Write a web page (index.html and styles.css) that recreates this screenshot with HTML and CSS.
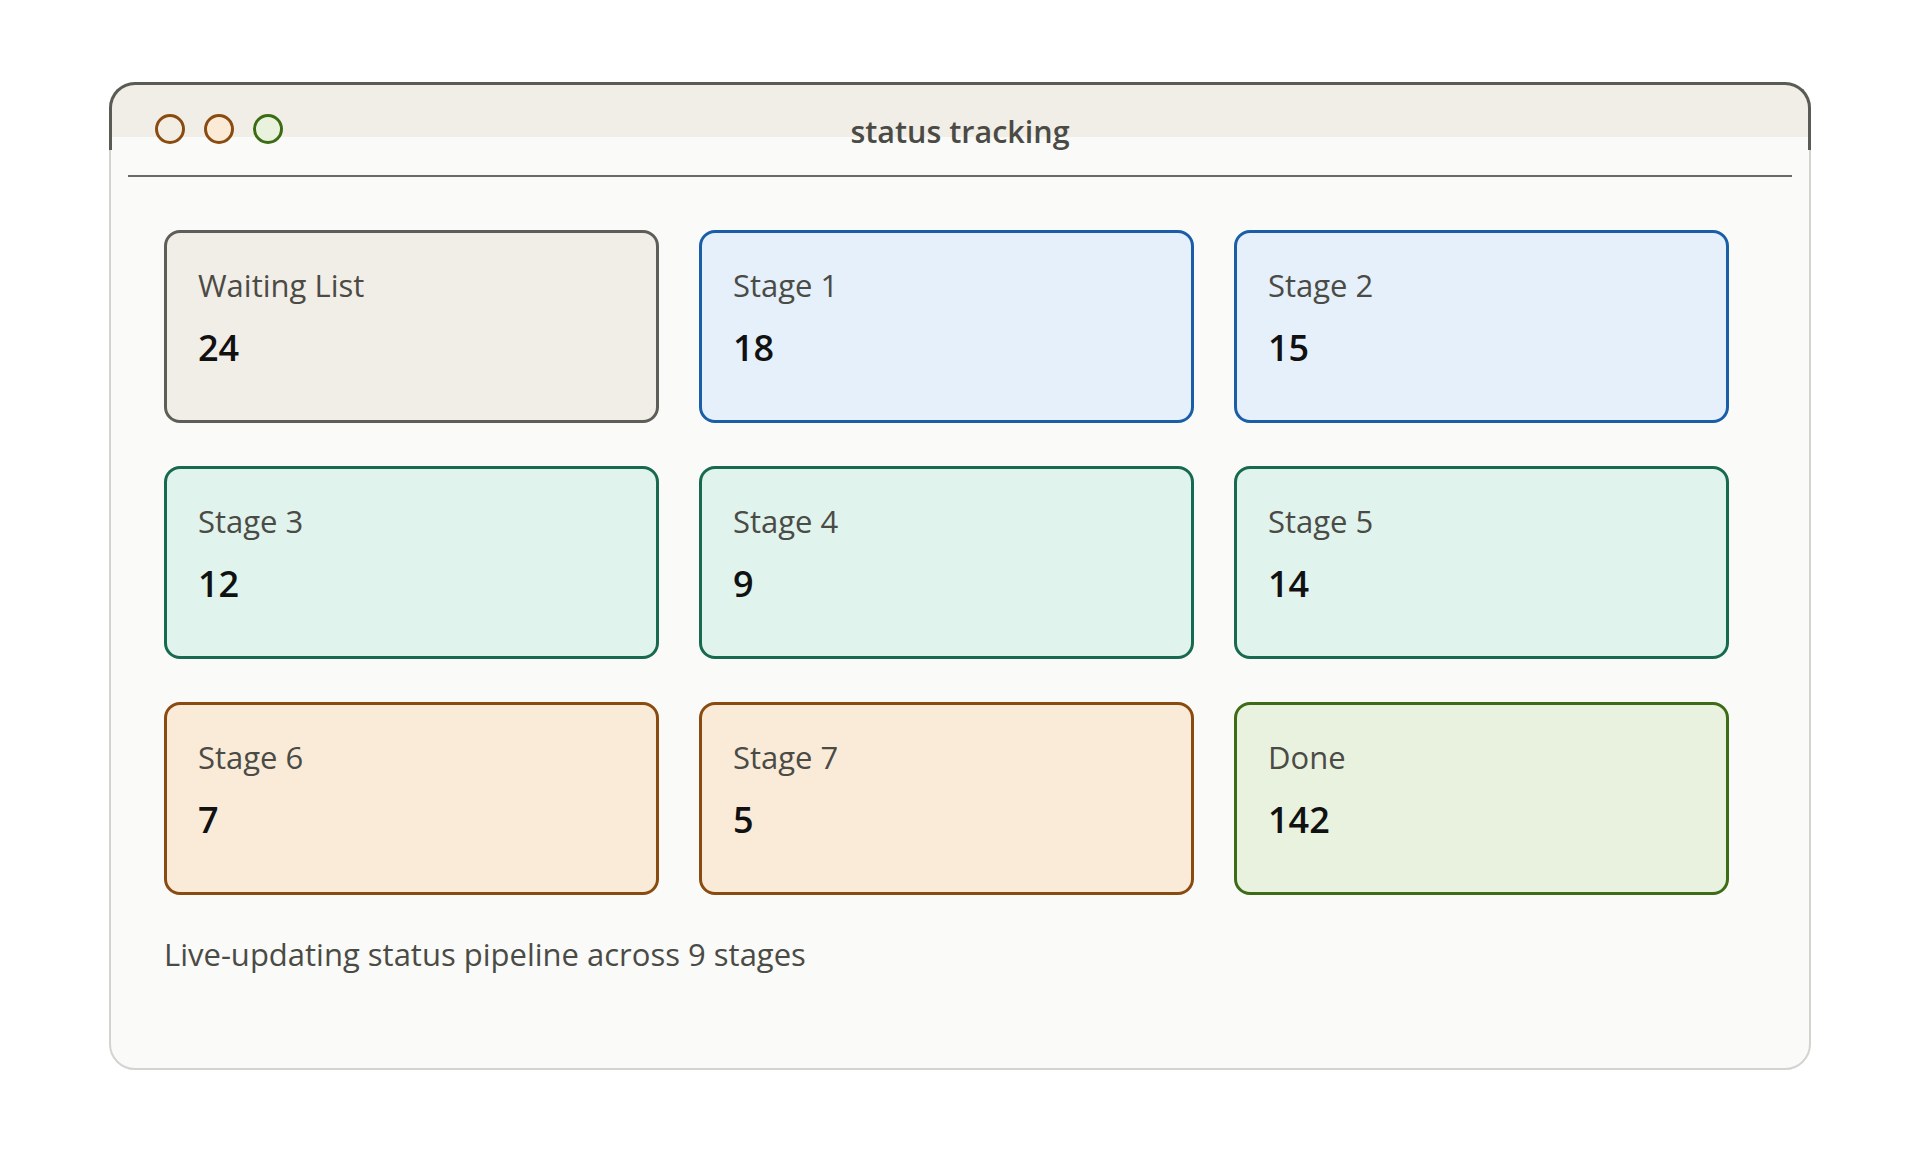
FILE: index.html
```html
<!DOCTYPE html>
<html lang="en">
<head>
    <meta charset="UTF-8">
    <meta name="viewport" content="width=device-width, initial-scale=1.0">
    <title>status tracking</title>
    <link rel="stylesheet" href="styles.css">
</head>
<body>
    <div class="page">
        <div class="window">
            <div class="chrome"></div>
            <header class="titlebar">
                <div class="lights">
                    <span class="light light-close"></span>
                    <span class="light light-min"></span>
                    <span class="light light-max"></span>
                </div>
                <h1 class="title">status tracking</h1>
            </header>

            <main class="board">
                <div class="stages">
                    <div class="stage stage-waiting">
                        <p class="stage-name">Waiting List</p>
                        <p class="stage-count">24</p>
                    </div>
                    <div class="stage stage-early">
                        <p class="stage-name">Stage 1</p>
                        <p class="stage-count">18</p>
                    </div>
                    <div class="stage stage-early">
                        <p class="stage-name">Stage 2</p>
                        <p class="stage-count">15</p>
                    </div>
                    <div class="stage stage-mid">
                        <p class="stage-name">Stage 3</p>
                        <p class="stage-count">12</p>
                    </div>
                    <div class="stage stage-mid">
                        <p class="stage-name">Stage 4</p>
                        <p class="stage-count">9</p>
                    </div>
                    <div class="stage stage-mid">
                        <p class="stage-name">Stage 5</p>
                        <p class="stage-count">14</p>
                    </div>
                    <div class="stage stage-late">
                        <p class="stage-name">Stage 6</p>
                        <p class="stage-count">7</p>
                    </div>
                    <div class="stage stage-late">
                        <p class="stage-name">Stage 7</p>
                        <p class="stage-count">5</p>
                    </div>
                    <div class="stage stage-done">
                        <p class="stage-name">Done</p>
                        <p class="stage-count">142</p>
                    </div>
                </div>
                <p class="caption">Live-updating status pipeline across 9 stages</p>
            </main>
        </div>
    </div>
</body>
</html>
```

FILE: styles.css
```css
/* Reset */
* {
    margin: 0;
    padding: 0;
    box-sizing: border-box;
    font-family: 'Open Sans', 'Noto Sans', sans-serif;
}

body {
    background: #ffffff;
    color: #4b4b46;
}

.page {
    padding: 82px 109px;
}

.window {
    background: #fafaf8;
    border: 2px solid #d3d3cf;
    border-radius: 26px;
    padding-bottom: 94px;
}

/* title bar band */
.chrome {
    height: 68px;
    margin: -2px -2px 0;
    border: 3px solid #5b5b56;
    border-bottom: none;
    border-radius: 26px 26px 0 0;
    background: linear-gradient(#f1eee7 0 52px, transparent 52px);
}

.titlebar {
    display: grid;
    grid-template-columns: 1fr auto 1fr;
    align-items: center;
    height: 95px;
    margin: -68px 17px 0;
    border-bottom: 2px solid #6b6b66;
}

.lights {
    display: flex;
    gap: 19px;
    margin-left: 27px;
}

.light {
    width: 30px;
    height: 30px;
    border-radius: 50%;
    border: 3px solid #8a4b10;
}

.light-close {
    background: #f3eee4;
}

.light-min {
    background: #fbead6;
}

.light-max {
    background: #e8f2dc;
    border-color: #3b6c14;
}

.title {
    font-size: 30.5px;
    font-weight: 600;
    line-height: 40px;
    color: #4b4b46;
    padding-top: 4px;
}

.board {
    padding: 53px 0 0 53px;
}

.stages {
    display: grid;
    grid-template-columns: repeat(3, 495px);
    grid-auto-rows: 193px;
    column-gap: 40px;
    row-gap: 43px;
}

.stage {
    border: 3px solid;
    border-radius: 16px;
    padding: 32px 31px;
}

.stage-name {
    font-size: 31px;
    line-height: 40px;
    color: #4b4b46;
}

.stage-count {
    margin-top: 19px;
    font-size: 36px;
    font-weight: 600;
    line-height: 48px;
    color: #111111;
}

.stage-waiting {
    background: #f1eee7;
    border-color: #5e5e59;
}

.stage-early {
    background: #e5f0fa;
    border-color: #1a5ea8;
}

.stage-mid {
    background: #e0f3ec;
    border-color: #176a4f;
}

.stage-late {
    background: #faebd9;
    border-color: #8a4b10;
}

.stage-done {
    background: #e9f2df;
    border-color: #3d6b16;
}

.caption {
    margin-top: 39px;
    font-size: 31px;
    line-height: 40px;
    color: #4b4b46;
}
```
